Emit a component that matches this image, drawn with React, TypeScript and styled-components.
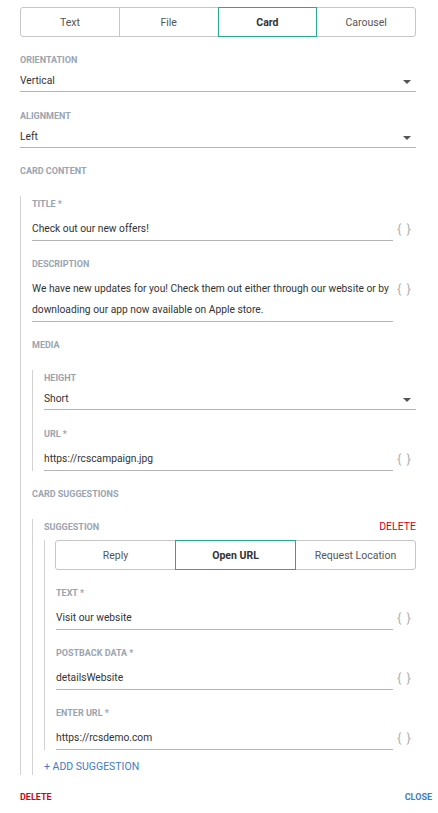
import { createGlobalStyle } from 'styled-components'
import styled from 'styled-components'

const GlobalStyle = createGlobalStyle`
  body {
    margin: 0;
    background: #ffffff;
    font-family: Roboto, 'Liberation Sans', Arial, sans-serif;
    color: #333333;
  }
  * { box-sizing: border-box; }
`

const Page = styled.div`
  width: 438px;
  padding: 7px 22px 0 20px;
`

const TabGroup = styled.div`
  display: flex;
  height: 30px;
`

const Tab = styled.div<{ $active?: boolean }>`
  flex: 1;
  display: flex;
  align-items: center;
  justify-content: center;
  font-size: 10.5px;
  font-weight: ${({ $active }) => ($active ? 700 : 400)};
  color: ${({ $active }) => ($active ? '#333' : '#555')};
  border: 1px solid ${({ $active }) => ($active ? '#26a98f' : '#c6c6c6')};
  margin-left: -1px;
  position: relative;
  z-index: ${({ $active }) => ($active ? 1 : 0)};
  &:first-child {
    margin-left: 0;
    border-radius: 3px 0 0 3px;
  }
  &:last-child {
    border-radius: 0 3px 3px 0;
  }
`

const Label = styled.div<{ $gap?: number }>`
  margin-top: ${({ $gap }) => $gap ?? 17}px;
  font-size: 9px;
  line-height: 12px;
  font-weight: 700;
  color: #9aa4b1;
  text-transform: uppercase;
`

const SelectValue = styled.div`
  display: flex;
  align-items: center;
  justify-content: space-between;
  margin-top: 4px;
  font-size: 10.25px;
  line-height: 21px;
  border-bottom: 1px solid #b4b4b4;
  padding-right: 5px;
`

const Caret = styled.span`
  width: 0;
  height: 0;
  margin-top: 3px;
  border-left: 4px solid transparent;
  border-right: 4px solid transparent;
  border-top: 4px solid #555;
`

const InputRow = styled.div`
  display: flex;
  align-items: flex-start;
  margin-top: 8px;
`

const InputValue = styled.div`
  flex: 1;
  font-size: 10.25px;
  line-height: 21px;
  padding-bottom: 1px;
  border-bottom: 1px solid #b4b4b4;
`

const Braces = styled.span`
  width: 23px;
  flex: none;
  text-align: center;
  font-size: 13px;
  line-height: 21px;
  color: #b3b3b3;
  letter-spacing: 1px;
`

const Nested = styled.div<{ $gap?: number }>`
  margin-top: ${({ $gap }) => $gap ?? 20}px;
  padding: 2px 0 0 11px;
  border-left: 1px solid #d2d2d2;
`

const SuggestionHead = styled.div`
  display: flex;
  align-items: center;
  justify-content: space-between;
  line-height: 12px;
`

const HeadLabel = styled.span`
  font-size: 9px;
  font-weight: 700;
  color: #9aa4b1;
  text-transform: uppercase;
`

const DangerLink = styled.span<{ $bold?: boolean }>`
  font-size: ${({ $bold }) => ($bold ? 9 : 10.5)}px;
  font-weight: ${({ $bold }) => ($bold ? 700 : 400)};
  color: #d0021b;
  text-transform: uppercase;
`

const SuggestionBody = styled.div`
  margin-top: 7px;
  padding-left: 11px;
  border-left: 1px solid #d2d2d2;
`

const SuggestionTabs = styled(TabGroup)`
  margin-left: -1px;
`

const AddLink = styled.div`
  margin-top: 9px;
  font-size: 10.5px;
  line-height: 16px;
  color: #3f7cc4;
  text-transform: uppercase;
`

const Footer = styled.div`
  display: flex;
  justify-content: space-between;
  align-items: center;
  margin: 16px -16px 0 0;
  line-height: 12px;
`

const CloseLink = styled.span`
  font-size: 9px;
  font-weight: 700;
  color: #3f7cc4;
  text-transform: uppercase;
`

const SelectField = ({ label, value, gap }: { label: string; value: string; gap?: number }) => (
  <>
    <Label $gap={gap}>{label}</Label>
    <SelectValue>
      <span>{value}</span>
      <Caret />
    </SelectValue>
  </>
)

const TextField = ({ label, value, gap }: { label: string; value: string; gap?: number }) => (
  <>
    <Label $gap={gap}>{label}</Label>
    <InputRow>
      <InputValue>{value}</InputValue>
      <Braces>{'{ }'}</Braces>
    </InputRow>
  </>
)

const App = () => {
  const types = ['Text', 'File', 'Card', 'Carousel']
  const actions = ['Reply', 'Open URL', 'Request Location']

  return (
    <Page>
      <GlobalStyle />
      <TabGroup>
        {types.map((t) => (
          <Tab key={t} $active={t === 'Card'}>
            {t}
          </Tab>
        ))}
      </TabGroup>

      <SelectField label="Orientation" value="Vertical" />
      <SelectField label="Alignment" value="Left" gap={18} />

      <Label $gap={17}>Card content</Label>
      <Nested $gap={19}>
        <TextField label="Title *" value="Check out our new offers!" gap={0} />
        <TextField
          label="Description"
          value="We have new updates for you! Check them out either through our website or by downloading our app now available on Apple store."
        />

        <Label>Media</Label>
        <Nested $gap={19}>
          <SelectField label="Height" value="Short" gap={0} />
          <TextField label="URL *" value="https://rcscampaign.jpg" gap={18} />
        </Nested>

        <Label>Card suggestions</Label>
        <Nested $gap={19}>
          <SuggestionHead>
            <HeadLabel>Suggestion</HeadLabel>
            <DangerLink>Delete</DangerLink>
          </SuggestionHead>
          <SuggestionBody>
            <SuggestionTabs>
              {actions.map((a) => (
                <Tab key={a} $active={a === 'Open URL'}>
                  {a}
                </Tab>
              ))}
            </SuggestionTabs>
            <TextField label="Text *" value="Visit our website" />
            <TextField label="Postback data *" value="detailsWebsite" />
            <TextField label="Enter URL *" value="https://rcsdemo.com" />
          </SuggestionBody>
          <AddLink>+ Add suggestion</AddLink>
        </Nested>
      </Nested>

      <Footer>
        <DangerLink $bold>Delete</DangerLink>
        <CloseLink>Close</CloseLink>
      </Footer>
    </Page>
  )
}

export default App
